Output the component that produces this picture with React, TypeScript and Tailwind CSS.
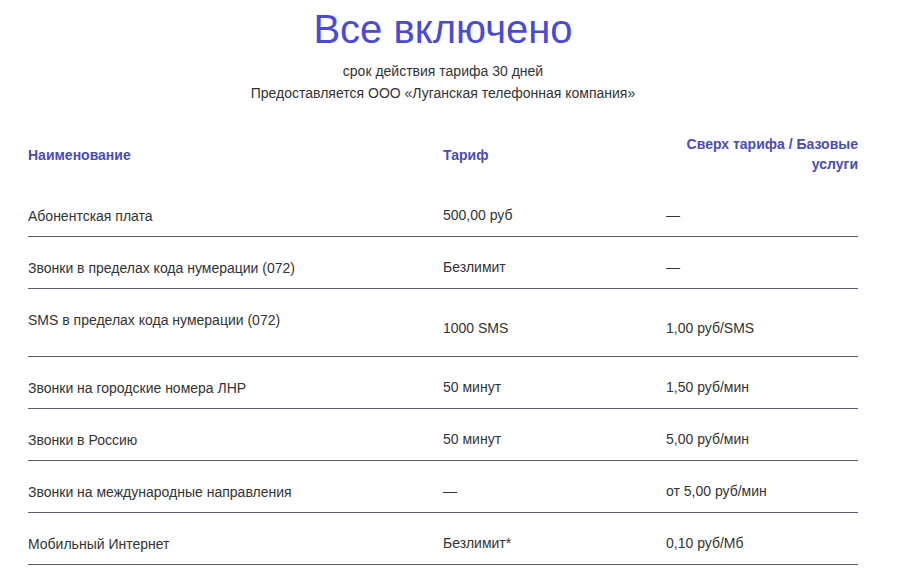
type Row = {
  name: string
  tariff: string
  extra: string
  tall?: boolean
}

const rows: Row[] = [
  { name: "Абонентская плата", tariff: "500,00 руб", extra: "—" },
  { name: "Звонки в пределах кода нумерации (072)", tariff: "Безлимит", extra: "—" },
  { name: "SMS в пределах кода нумерации (072)", tariff: "1000 SMS", extra: "1,00 руб/SMS", tall: true },
  { name: "Звонки на городские номера ЛНР", tariff: "50 минут", extra: "1,50 руб/мин" },
  { name: "Звонки в Россию", tariff: "50 минут", extra: "5,00 руб/мин" },
  { name: "Звонки на международные направления", tariff: "—", extra: "от 5,00 руб/мин" },
  { name: "Мобильный Интернет", tariff: "Безлимит*", extra: "0,10 руб/Мб" },
]

const TariffRow = ({ row }: { row: Row }) => {
  // the SMS row is taller: name sits at the top, values are lower
  const valuePad = row.tall ? "pt-[30px]" : "pt-[21px]"
  return (
    <div
      className={`grid grid-cols-[415px_223px_1fr] border-b border-[#5c5a78] text-[14px] leading-[18px] text-[#333] ${
        row.tall ? "h-[68px]" : "h-[52px]"
      }`}
    >
      <div className="pt-[22px]">{row.name}</div>
      <div className={valuePad}>{row.tariff}</div>
      <div className={valuePad}>{row.extra}</div>
    </div>
  )
}

export default function App() {
  return (
    <div
      className="min-h-[580px] w-[904px] bg-white"
      style={{ fontFamily: '"Liberation Sans", Arial, sans-serif' }}
    >
      <div className="flex w-[886px] flex-col items-center pt-[6px]">
        <h1 className="text-[40px] leading-[46px] text-[#4a4ad4]">Все включено</h1>
        <p className="mt-[8px] text-[14px] leading-[22px] text-[#333]">срок действия тарифа 30 дней</p>
        <p className="text-[14px] leading-[22px] text-[#333]">
          Предоставляется ООО «Луганская телефонная компания»
        </p>
      </div>

      <div className="ml-[28px] mt-[30px] w-[830px]">
        <div className="grid h-[51px] grid-cols-[415px_223px_1fr] text-[14px] font-bold leading-[20px] text-[#4b4bb8]">
          <div className="pt-[11px]">Наименование</div>
          <div className="pt-[11px]">Тариф</div>
          <div className="text-right">
            Сверх тарифа / Базовые
            <br />
            услуги
          </div>
        </div>
        {rows.map((row) => (
          <TariffRow key={row.name} row={row} />
        ))}
      </div>
    </div>
  )
}
